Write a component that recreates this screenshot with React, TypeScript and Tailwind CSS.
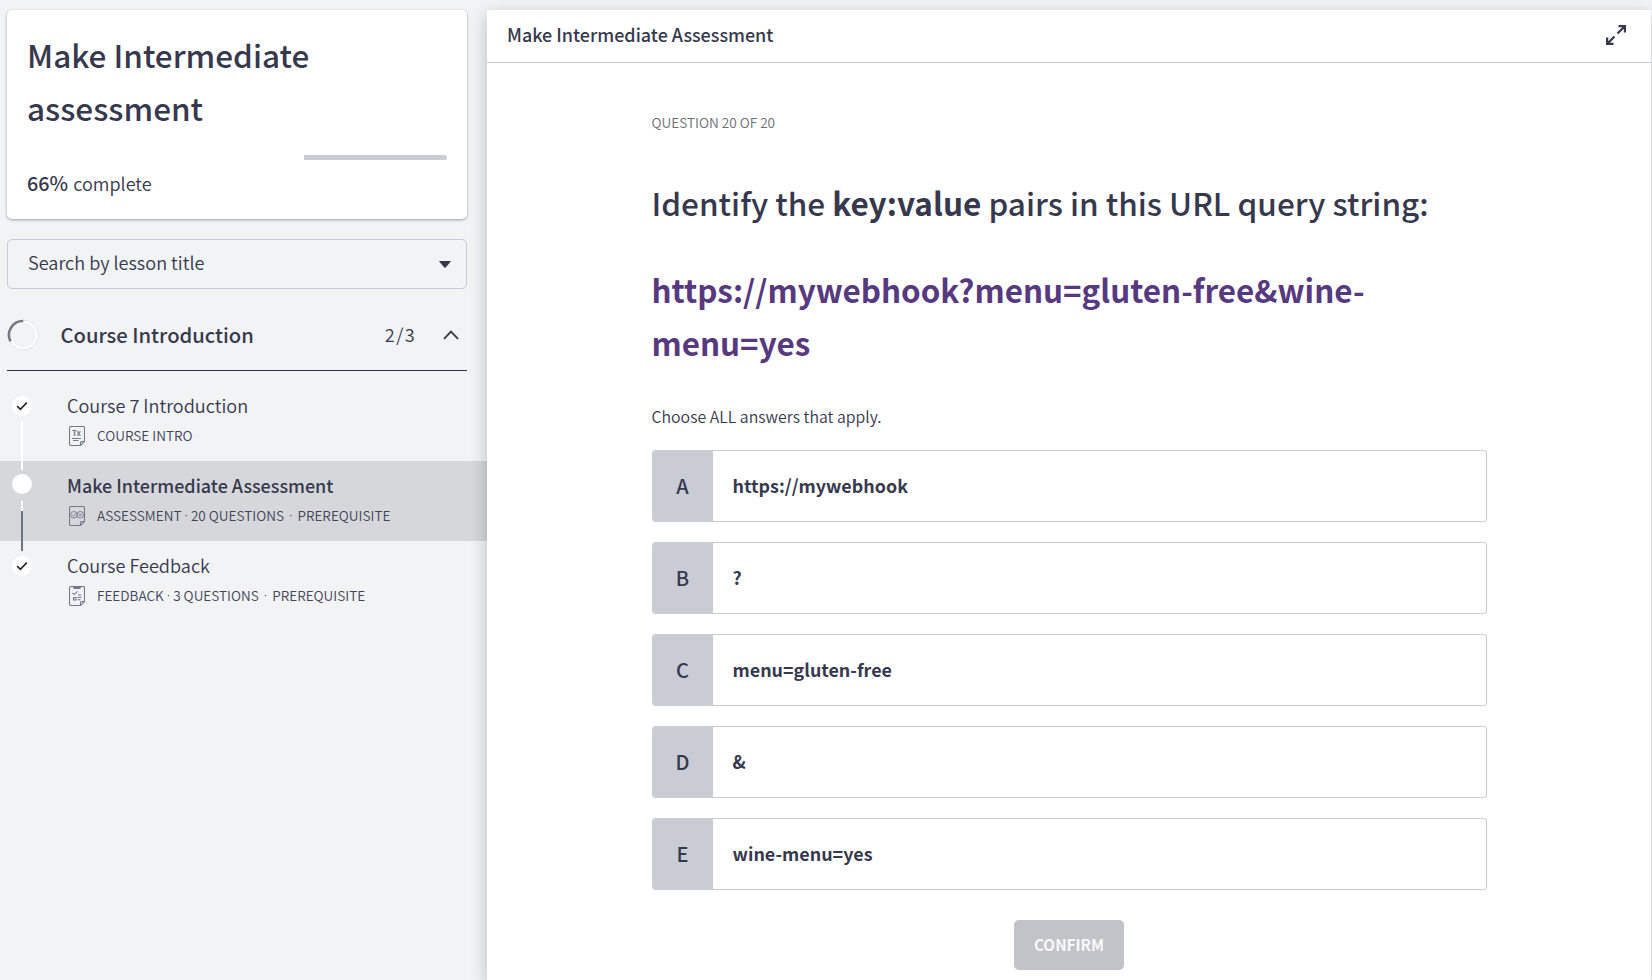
import type { ReactNode } from "react";

const options = [
  { letter: "A", text: "https://mywebhook" },
  { letter: "B", text: "?" },
  { letter: "C", text: "menu=gluten-free" },
  { letter: "D", text: "&" },
  { letter: "E", text: "wine-menu=yes" },
];

function Check() {
  return (
    <div className="flex h-5 w-5 shrink-0 items-center justify-center rounded-full bg-white">
      <svg width="12" height="12" viewBox="0 0 12 12" fill="none" stroke="#26272f" strokeWidth="1.7">
        <path d="M1.2 6.2 4.4 9.3 10.8 2.6" />
      </svg>
    </div>
  );
}

function Page({ children, clip }: { children: ReactNode; clip?: boolean }) {
  return (
    <svg width="16" height="20" viewBox="0 0 16 20" fill="none" stroke="#75788a" strokeWidth="1.1">
      <path d="M2 .5H14Q15.5 .5 15.5 2V15.5L11.5 19.5H2Q.5 19.5 .5 18V2Q.5 .5 2 .5ZM11.5 19.5V16.5Q11.5 15.500 12.5 15.500H15.5" />
      {clip && <path d="M4 0H12V1.5L11 3H5L4 1.5Z" fill="#75788a" stroke="none" />}
      {children}
    </svg>
  );
}

function Dot({ className }: { className: string }) {
  return <span className={`font-['Noto_Sans',sans-serif] leading-none ${className}`}>·</span>;
}

function Lesson({ rail, title, icon, meta, active }: { rail: ReactNode; title: string; icon: ReactNode; meta: ReactNode; active?: boolean }) {
  return (
    <li className={`flex h-20 ${active ? "bg-[#d6d7db]" : ""}`}>
      <div className="flex w-11 shrink-0 flex-col items-center">{rail}</div>
      <div className="pt-2.5 pl-[23px]">
        <div className={`h-[30px] leading-7 whitespace-nowrap ${active ? "text-[17.95px] font-medium" : "text-[18.1px] font-[350]"}`}>{title}</div>
        <div className="flex h-[30px] items-center pl-0.5 text-[13.6px] leading-5 font-[350] whitespace-nowrap text-[#424559]">
          {icon}
          <span className="pb-0.5 pl-3">{meta}</span>
        </div>
      </div>
    </li>
  );
}

export default function App() {
  return (
    <div className="flex h-[980px] w-[1652px] overflow-hidden bg-[#f1f3f5] pt-2.5 font-['Noto_Sans_CJK_SC',sans-serif] text-[#36394d]">
      <aside className="w-[487px] shrink-0">
        <section className="mr-5 ml-[7px] h-[209px] rounded-[5px] bg-white px-5 pt-[18px] shadow-[0_1px_3px_rgba(0,0,0,0.35)]">
          <h1 className="text-[31.5px] leading-[53px] font-medium">
            Make Intermediate
            <br />
            assessment
          </h1>
          <div className="mt-[21px] flex h-[5px] justify-end">
            <div className="w-[143px] rounded-r-full bg-[#c9cbd5]" />
          </div>
          <p className="mt-[9px] h-[27px] text-[18.1px] leading-[27px] font-[350]">
            <span className="mr-px text-[19.8px] font-medium">66%</span> complete
          </p>
        </section>

        <div className="mt-5 mr-5 ml-[7px] flex h-[50px] items-center justify-between rounded-[5px] border border-[#c9cbd5] pr-[15px] pl-5 text-[18.1px] font-[350]">
          <span className="pb-1 leading-7">Search by lesson title</span>
          <svg width="12" height="7" viewBox="0 0 12 7" fill="#36394d">
            <path d="M.8 0H11.2Q12.3 0 11.6 .8L6.7 6.5Q6 7.2 5.3 6.5L.4 .8Q-.3 0 .8 0Z" />
          </svg>
        </div>

        <div className="mr-5 ml-[7px] flex h-[82px] items-center border-b border-[#36304f] pt-[11px]">
          <svg width="32" height="32" viewBox="0 0 32 32" fill="none">
            <circle cx="16.3" cy="16" r="14.6" stroke="#b9bac2" strokeWidth=".8" strokeDasharray="2 1" />
            <circle cx="16.3" cy="16" r="13.6" stroke="#fff" strokeWidth="2" />
            <path d="M3.5 22.3A14 14 0 0 1 16.3 2" stroke="#75788a" strokeWidth="2.6" />
          </svg>
          <h2 className="pl-[21.5px] text-[20.2px] leading-8 font-medium">Course Introduction</h2>
          <span className="ml-auto pb-0.5 text-[18.1px] leading-8 font-[350] tracking-[1.4px]">2/3</span>
          <svg className="mr-2 ml-[27px]" width="16" height="10" viewBox="0 0 16 10" fill="none" stroke="#36394d" strokeWidth="1.9">
            <path d="M1 8.8 8 1.7 15 8.8" />
          </svg>
        </div>

        <ul className="mt-2.5">
          <Lesson
            title="Course 7 Introduction"
            rail={
              <>
                <div className="h-[15px]" />
                <Check />
                <div className="mt-[5px] h-10 w-0.5 bg-white" />
              </>
            }
            icon={
              <Page>
                <text x="3" y="9.6" fontSize="7.8" fontWeight="700" fill="#75788a" stroke="none">
                  Tx
                </text>
                <path d="M3 12.5H12M4 14.500H9.5" />
              </Page>
            }
            meta="COURSE INTRO"
          />
          <Lesson
            active
            title="Make Intermediate Assessment"
            rail={
              <>
                <div className="h-[9px] w-0.5 bg-white" />
                <div className="mt-1 h-5 w-5 shrink-0 rounded-full bg-white" />
                <div className="mt-[7px] h-2.5 w-0.5 bg-white" />
                <div className="h-[30px] w-0.5 bg-[#6f7283]" />
              </>
            }
            icon={
              <Page>
                <circle cx="4.9" cy="8.8" r="3.3" strokeWidth=".9" />
                <circle cx="11.3" cy="8.8" r="3.3" strokeWidth=".9" />
                <path d="M3.2 8.8 4.6 10.2 7 7.4M10 7.5 12.6 10.1M12.6 7.5 10 10.1" strokeWidth=".9" />
              </Page>
            }
            meta={
              <>
                ASSESSMENT
                <Dot className="mx-[3px]" />
                20 QUESTIONS
                <Dot className="mx-[5px]" />
                PREREQUISITE
              </>
            }
          />
          <Lesson
            title="Course Feedback"
            rail={
              <>
                <div className="h-2.5 w-0.5 bg-[#6f7283]" />
                <div className="h-[5px]" />
                <Check />
              </>
            }
            icon={
              <Page clip>
                <path d="M3.5 7 5.2 8.6 8.5 5.4M9 9H12.5M4.5 11.5H7V14H4.500ZM8.5 11.5H12.5M8.5 13.8H11.5" />
              </Page>
            }
            meta={
              <>
                FEEDBACK
                <Dot className="mx-[3px]" />3 QUESTIONS
                <Dot className="mx-[5px]" />
                PREREQUISITE
              </>
            }
          />
        </ul>
      </aside>

      <main className="mr-px flex-1 bg-white shadow-[0_5px_16px_rgba(0,0,0,0.24)]">
        <header className="flex h-[53px] items-center justify-between border-b border-[#c9cbd5] pr-[25px] pl-5">
          <span className="pb-1 text-[17.95px] leading-7 font-medium">Make Intermediate Assessment</span>
          <svg className="mt-[-2px]" width="20" height="20" viewBox="0 0 20 20" fill="none" stroke="#36394d" strokeWidth="2.2">
            <path d="M12.5 1.1H18.9V7.5M18.5 1.5 11.5 8.5M7.5 18.9H1.1V12.5M1.5 18.5 8.5 11.5" />
          </svg>
        </header>

        <div className="mx-auto w-[835px]">
          <div className="mt-[49px] h-5 text-[13.6px] leading-5 font-[350] text-[#6b6e77]">QUESTION 20 OF 20</div>
          <h2 className="mt-11 text-[31.53px] leading-[53px] font-medium whitespace-nowrap">
            Identify the <b className="font-bold">key:value</b> pairs in this URL query string:
          </h2>
          <h2 className="mt-[34px] text-[31.4px] leading-[53px] font-bold text-[#56397f]">
            https://mywebhook?menu=gluten-free&amp;wine-
            <br />
            menu=yes
          </h2>
          <p className="mt-9 h-6 text-[15.85px] leading-6 font-[350]">Choose ALL answers that apply.</p>

          <div className="mt-[21px] flex flex-col gap-5">
            {options.map((o) => (
              <div key={o.letter} className="flex h-[72px] overflow-hidden rounded-[3px] border border-[#c9cbd5]">
                <div className="flex w-[60px] items-center justify-center bg-[#c9cbd5] text-[20px] leading-7 font-medium">{o.letter}</div>
                <div className="flex items-center pb-[3px] pl-5 text-[17.9px] leading-7 font-bold">{o.text}</div>
              </div>
            ))}
          </div>

          <button className="mx-auto mt-[30px] flex h-[50px] w-[110px] items-center justify-center rounded-[5px] bg-[#c2c3c9] pb-0.5 text-[15.3px] font-bold text-[#f8f8fa]">
            CONFIRM
          </button>
        </div>
      </main>
    </div>
  );
}
